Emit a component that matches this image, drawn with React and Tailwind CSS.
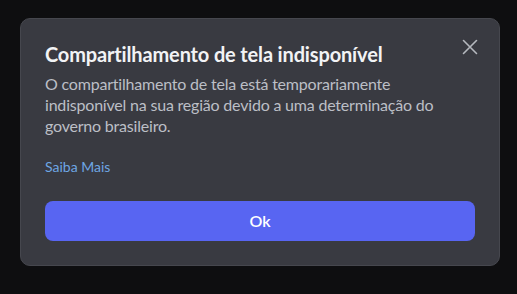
import React from "react";

const CloseIcon = () => (
  <svg width="16" height="16" viewBox="0 0 16 16" fill="none">
    <path d="M1.5 1.5L14.5 14.5M14.5 1.5L1.5 14.5" stroke="currentColor" strokeWidth="1.6" strokeLinecap="round" />
  </svg>
);

export default function App() {
  return (
    <div className="w-[517px] h-[294px] bg-[#0e0e10] pt-[18px] pl-[20px]" style={{ fontFamily: "Lato, \"Noto Sans\", sans-serif" }}>
      <div className="relative w-[480px] h-[248px] rounded-[10px] border border-[#46474e] bg-[#393a41] px-6 pt-[22px] pb-6 flex flex-col">
        <button className="absolute right-[21px] top-[20px] text-[#b5b8be] p-0">
          <CloseIcon />
        </button>
        <h1 className="text-[20px] leading-[26px] font-bold text-[#f2f3f5] tracking-[-0.15px]">
          Compartilhamento de tela indisponível
        </h1>
        <p className="mt-[6px] text-[16px] leading-[21px] text-[#bcbfc6] tracking-[-0.2px] pr-6">
          O compartilhamento de tela está temporariamente indisponível na sua região devido a uma determinação do governo brasileiro.
        </p>
        <a className="mt-[22px] text-[14px] leading-[18px] text-[#6ea6e4]">Saiba Mais</a>
        <button className="mt-auto h-10 w-full rounded-[8px] bg-[#5865f2] text-white text-[16px] font-semibold">
          Ok
        </button>
      </div>
    </div>
  );
}
